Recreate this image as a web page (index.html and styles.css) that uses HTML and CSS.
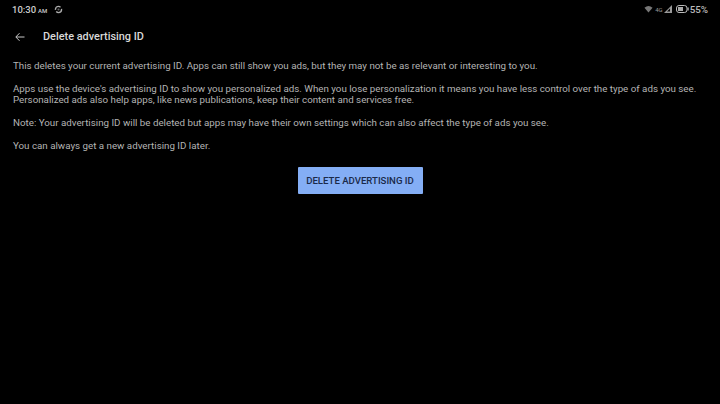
FILE: index.html
```html
<!DOCTYPE html>
<html lang="en">
<head>
<meta charset="utf-8">
<title>Delete advertising ID</title>
<link rel="stylesheet" href="styles.css">
</head>
<body>
<div class="status">
  <div class="status-left">
    <span class="time">10:30<span class="ampm">AM</span></span>
    <svg class="sync" width="9" height="9" viewBox="0 0 10 10"><circle cx="5" cy="5" r="3.4" fill="none" stroke="#aaa" stroke-width="1.5" stroke-dasharray="8 2"/><circle cx="5" cy="5" r="1.2" fill="#666"/></svg>
  </div>
  <div class="status-right">
    <svg width="9" height="8" viewBox="0 0 10 8"><path d="M0.5 2.5 Q5 -1 9.5 2.5 L5 8 Z" fill="#777"/></svg>
    <span class="net">4G</span>
    <svg class="signal" width="8" height="8" viewBox="0 0 8 8"><path d="M8 0 V8 H0 Z" fill="#999"/><path d="M6 3.5 V6.5 H3 Z" fill="#000"/></svg>
    <svg class="batt" width="13" height="8" viewBox="0 0 13 8"><rect x="0.5" y="0.5" width="10.5" height="7" rx="2.5" fill="none" stroke="#bbb"/><rect x="2" y="2" width="5" height="4" fill="#aaa"/><rect x="11.5" y="2.5" width="1.2" height="3" fill="#bbb"/></svg>
    <span class="pct">55%</span>
  </div>
</div>
<header class="appbar">
  <svg class="back" width="10" height="10" viewBox="0 0 10 10"><path d="M9.5 5 H1 M4.5 1.2 L0.8 5 L4.5 8.8" fill="none" stroke="#c8c8c8" stroke-width="1"/></svg>
  <h1 class="title">Delete advertising ID</h1>
</header>
<main class="content">
  <p class="para">This deletes your current advertising ID. Apps can still show you ads, but they may not be as relevant or interesting to you.</p>
  <p class="para">Apps use the device's advertising ID to show you personalized ads. When you lose personalization it means you have less control over the type of ads you see.<br>Personalized ads also help apps, like news publications, keep their content and services free.</p>
  <p class="para">Note: Your advertising ID will be deleted but apps may have their own settings which can also affect the type of ads you see.</p>
  <p class="para">You can always get a new advertising ID later.</p>
  <div class="actions"><button class="delete">DELETE ADVERTISING ID</button></div>
</main>
</body>
</html>
```

FILE: styles.css
```css
* { box-sizing: border-box; }
html, body { margin: 0; height: 100%; }
body {
  background: #000;
  color: #b4b4b4;
  font-family: Roboto, "Liberation Sans", sans-serif;
  overflow: hidden;
}
.status {
  display: flex;
  justify-content: space-between;
  align-items: center;
  height: 18px;
  padding: 0 12px 0 12px;
}
.status-left, .status-right { display: flex; align-items: center; }
.status-left { gap: 7px; }
.status-right { gap: 1px; }
.time { font-size: 9.5px; font-weight: 500; color: #ccc; }
.ampm { font-size: 6px; margin-left: 2px; }
.net { font-size: 6px; color: #999; margin-left: 1px; }
.batt { margin-left: 3px; }
.pct { font-size: 9.8px; font-weight: 500; color: #bbb; }
.appbar {
  display: flex;
  align-items: center;
  height: 37px;
  padding-left: 15px;
}
.back { flex: none; }
.title {
  margin: 0 0 0 18px;
  font-size: 10.9px;
  font-weight: 500;
  color: #d8d8d8;
}
.content { padding: 5px 13px 0; }
.para {
  margin: 0 0 12px;
  font-size: 9.77px;
  line-height: 11px;
  white-space: nowrap;
}
.actions {
  display: flex;
  justify-content: center;
  margin-top: 16px;
}
.delete {
  width: 125px;
  height: 27px;
  padding: 0;
  border: 0;
  border-radius: 1px;
  background: #84aef5;
  color: #1a2a4a;
  font-family: inherit;
  font-size: 9.6px;
  font-weight: 500;
}
```
